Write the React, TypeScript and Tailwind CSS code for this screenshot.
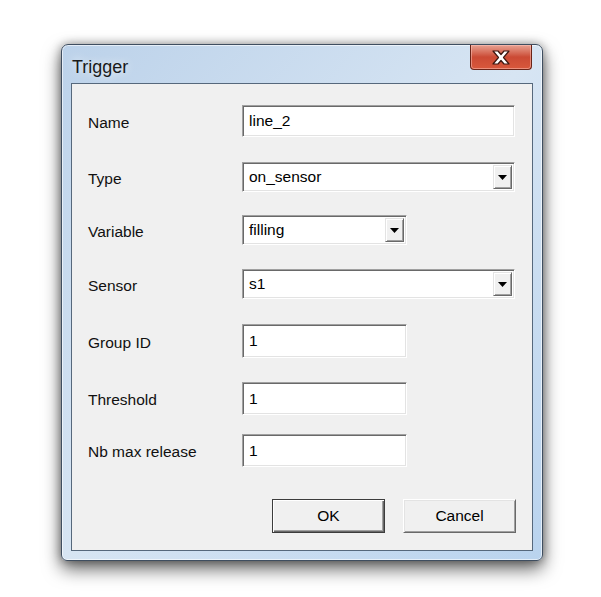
import React from "react";

const sunken =
  "border border-t-[#a0a0a0] border-l-[#a0a0a0] border-b-[#ffffff] border-r-[#ffffff] shadow-[inset_1px_1px_0_#696969,inset_-1px_-1px_0_#e3e3e3] bg-white";

const TextBox = ({ value, width, height }: { value: string; width: number; height: number }) => (
  <div className={`${sunken} flex items-center pl-[6px] text-[15.5px] text-black`} style={{ width, height }}>
    {value}
  </div>
);

const Combo = ({ value, width }: { value: string; width: number }) => (
  <div className={`${sunken} flex items-stretch p-[2px] text-[15.5px] text-black`} style={{ width, height: 30 }}>
    <div className="flex-1 flex items-center pl-[4px]">{value}</div>
    <div className="w-[19px] flex items-center justify-center bg-[#f0f0f0] border border-t-[#e3e3e3] border-l-[#e3e3e3] border-b-[#696969] border-r-[#696969] shadow-[inset_1px_1px_0_#ffffff,inset_-1px_-1px_0_#a0a0a0]">
      <svg width="9" height="5" viewBox="0 0 9 5">
        <path d="M0 0h9L4.5 5z" fill="#000" />
      </svg>
    </div>
  </div>
);

const Row = ({ label, mt, children }: { label: string; mt: string; children: React.ReactNode }) => (
  <div className={`flex items-center ${mt}`}>
    <span className="w-[154px] pt-[3px] text-[15.5px] text-[#111]">{label}</span>
    {children}
  </div>
);

export default function App() {
  return (
    <div className="w-[601px] h-[597px] bg-white pl-[61px] pt-[44px] font-['Liberation_Sans',Arial,sans-serif]">
      <div className="w-[482px] h-[517px] flex flex-col rounded-t-[7px] rounded-b-[6px] border border-[#3f4e60] bg-gradient-to-br from-[#bcd2ea] via-[#d7e5f3] to-[#b9d3ee] shadow-[0_8px_18px_rgba(0,0,0,0.6),0_0_10px_rgba(0,0,0,0.35),inset_0_0_0_1px_rgba(255,255,255,0.6)]">
        <div className="h-[38px] flex items-start justify-between">
          <span className="mt-[9px] ml-[10px] text-[18px] text-[#1a1a1a] [text-shadow:0_0_8px_rgba(255,255,255,0.9)]">
            Trigger
          </span>
          <button className="mr-[10px] w-[62px] h-[25px] flex items-center justify-center rounded-b-[4px] border border-t-0 border-[#6a2418] bg-gradient-to-b from-[#e7a192] via-[#cb4a34] to-[#d8583c] shadow-[inset_0_0_0_1px_rgba(255,200,190,0.5)]">
            <svg width="20" height="15" viewBox="0 0 20 15">
              <path
                d="M2 1h5l3 3.5L13 1h5l-5.5 6.5L18 14h-5l-3-3.5L7 14H2l5.5-6.5z"
                fill="#fff"
                stroke="#3d1710"
                strokeWidth="1.2"
                strokeLinejoin="round"
              />
            </svg>
          </button>
        </div>
        <div className="mx-[9px] mb-[9px] flex-1 flex flex-col border border-[#56687c] bg-[#f0f0f0] pl-[16px] pr-[16px] pb-[17px]">
          <Row label="Name" mt="mt-[21px]">
            <TextBox value="line_2" width={273} height={32} />
          </Row>
          <Row label="Type" mt="mt-[25px]">
            <Combo value="on_sensor" width={273} />
          </Row>
          <Row label="Variable" mt="mt-[23px]">
            <Combo value="filling" width={165} />
          </Row>
          <Row label="Sensor" mt="mt-[24px]">
            <Combo value="s1" width={273} />
          </Row>
          <Row label="Group ID" mt="mt-[25px]">
            <TextBox value="1" width={165} height={34} />
          </Row>
          <Row label="Threshold" mt="mt-[24px]">
            <TextBox value="1" width={165} height={33} />
          </Row>
          <Row label="Nb max release" mt="mt-[19px]">
            <TextBox value="1" width={165} height={33} />
          </Row>
          <div className="mt-auto flex justify-end gap-[18px]">
            <button className="w-[113px] h-[34px] text-[15.5px] text-black bg-[#f0f0f0] border border-[#3c3c3c] shadow-[inset_1px_1px_0_#ffffff,inset_-1px_-1px_0_#696969,inset_-2px_-2px_0_#a0a0a0]">
              OK
            </button>
            <button className="w-[113px] h-[34px] text-[15.5px] text-black bg-[#f0f0f0] border border-t-[#ffffff] border-l-[#ffffff] border-b-[#696969] border-r-[#696969] shadow-[inset_1px_1px_0_#e3e3e3,inset_-1px_-1px_0_#a0a0a0]">
              Cancel
            </button>
          </div>
        </div>
      </div>
    </div>
  );
}
